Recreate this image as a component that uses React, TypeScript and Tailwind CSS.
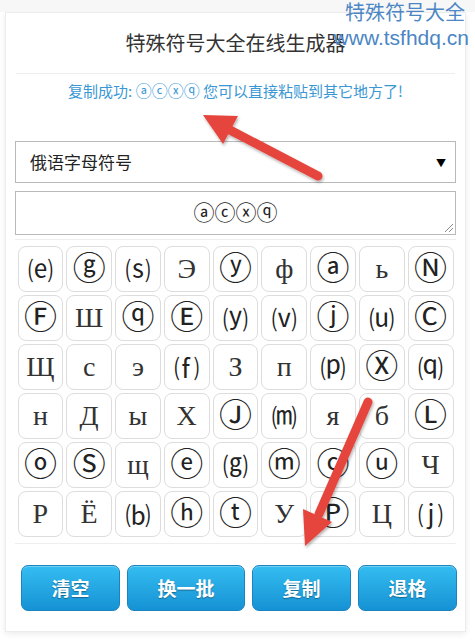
import React from "react";

const rows: string[][] = [
  ["⒠", "ⓖ", "⒮", "Э", "ⓨ", "ф", "ⓐ", "ь", "Ⓝ"],
  ["Ⓕ", "Ш", "ⓠ", "Ⓔ", "⒴", "⒱", "ⓙ", "⒰", "Ⓒ"],
  ["Щ", "с", "э", "⒡", "З", "п", "⒫", "Ⓧ", "⒬"],
  ["н", "Д", "ы", "Х", "Ⓙ", "⒨", "я", "б", "Ⓛ"],
  ["ⓞ", "Ⓢ", "щ", "ⓔ", "⒢", "ⓜ", "ⓒ", "ⓤ", "Ч"],
  ["Р", "Ё", "⒝", "ⓗ", "ⓣ", "У", "Ⓟ", "Ц", "⒥"],
];

const isCyr = (s: string) => /[\u0400-\u04FF]/.test(s);
const isCircled = (s: string) => /[\u24B6-\u24E9]/.test(s);

const DJ = '"DejaVu Sans", "Noto Sans CJK SC", sans-serif';

function Btn({ label, w }: { label: string; w: string }) {
  return (
    <button
      className={`${w} h-[46px] rounded-[7px] border border-[#1b83bf] bg-gradient-to-b from-[#34bdf1] to-[#1592d4] text-white text-[19px] font-bold [text-shadow:0_1px_1px_rgba(0,0,0,0.35)] shadow-[inset_0_1px_0_rgba(255,255,255,0.3)]`}
    >
      {label}
    </button>
  );
}

function cellClass(c: string) {
  if (isCyr(c)) return "text-[28px] text-[#333]";
  if (isCircled(c)) return "text-[33px] text-[#222]";
  return "text-[25px] text-[#222]";
}

function cellFont(c: string) {
  if (isCyr(c)) return '"Liberation Serif", "DejaVu Serif", serif';
  if (isCircled(c)) return DJ;
  return '"Noto Sans CJK SC", sans-serif';
}

export default function App() {
  return (
    <div
      className="relative w-[475px] h-[640px] bg-white overflow-hidden"
      style={{ fontFamily: '"Noto Sans CJK SC", "Noto Sans", sans-serif' }}
    >
      <div className="absolute left-0 top-0 w-[475px] h-[12px] bg-[#f7f7f7]" />
      <div className="ml-[5px] pt-[12px] w-[461px]">
        <div className="bg-white border border-[#ececec] shadow-[0_2px_6px_rgba(0,0,0,0.08)] h-[620px] flex flex-col">
          <div className="h-[61px] flex items-center justify-center text-[20px] text-[#333] mx-[10px] border-b border-[#eeeeee]">
            特殊符号大全在线生成器
          </div>
          <div className="h-[67px] pt-[6px] text-center text-[15px] text-[#3a97d4]">
            复制成功:{" "}
            <span className="text-[16px] leading-none" style={{ fontFamily: DJ }}>
              ⓐⓒⓧⓠ
            </span>{" "}
            您可以直接粘贴到其它地方了!
          </div>
          <div className="mx-[9px] h-[42px] border border-[#b9b9b9] flex items-center justify-between pl-[14px] pr-[9px] text-[17px] text-[#222]">
            <span>俄语字母符号</span>
            <span className="text-[10px] text-black">▼</span>
          </div>
          <div className="mx-[9px] mt-[8px] h-[44px] border border-[#b9b9b9] relative flex items-center justify-center">
            <span className="text-[21px] text-[#222] leading-none" style={{ fontFamily: DJ }}>
              ⓐⓒⓧⓠ
            </span>
            <svg className="absolute right-[2px] bottom-[2px]" width="9" height="9" viewBox="0 0 9 9">
              <line x1="1" y1="9" x2="9" y2="1" stroke="#888" strokeWidth="1" />
              <line x1="5" y1="9" x2="9" y2="5" stroke="#888" strokeWidth="1" />
            </svg>
          </div>
          <div className="mx-[9px] mt-[4px] border-t border-[#eeeeee] pt-[6px] pb-[6px] px-[2px] border-b">
            <div className="grid grid-cols-9 gap-[3px] w-[436px] mx-auto">
              {rows.flat().map((c, i) => (
                <div
                  key={i}
                  className={`h-[46px] rounded-[8px] border border-[#dddddd] bg-white flex items-center justify-center ${cellClass(
                    c
                  )}`}
                  style={{ fontFamily: cellFont(c) }}
                >
                  <span className="leading-[30px]">{c}</span>
                </div>
              ))}
            </div>
          </div>
          <div className="flex gap-[7px] pl-[15px] pt-[21px]">
            <Btn label="清空" w="w-[99px]" />
            <Btn label="换一批" w="w-[118px]" />
            <Btn label="复制" w="w-[99px]" />
            <Btn label="退格" w="w-[99px]" />
          </div>
        </div>
      </div>

      {/* watermark */}
      <div className="absolute right-[6px] top-[2px] text-[#4c86c4] text-right leading-none">
        <div className="text-[20px] pr-[4px]">特殊符号大全</div>
        <div
          className="text-[21px] mt-[5px]"
          style={{ fontFamily: '"Liberation Sans", Arial, sans-serif' }}
        >
          www.tsfhdq.cn
        </div>
      </div>

      {/* red arrows */}
      <svg className="absolute left-0 top-0 pointer-events-none" width="475" height="640">
        <defs>
          <filter id="sh" x="-20%" y="-20%" width="140%" height="140%">
            <feDropShadow dx="1" dy="2" stdDeviation="1.5" floodColor="#000" floodOpacity="0.3" />
          </filter>
        </defs>
        <g filter="url(#sh)" fill="#e5453c" stroke="#e5453c">
          <line x1="318" y1="176" x2="228" y2="129" strokeWidth="9" strokeLinecap="round" />
          <polygon points="203,115 238,116 223,144" stroke="none" />
          <line x1="368" y1="402" x2="319" y2="514" strokeWidth="9" strokeLinecap="round" />
          <polygon points="305,546 332,522 303,509" stroke="none" />
        </g>
      </svg>
    </div>
  );
}
